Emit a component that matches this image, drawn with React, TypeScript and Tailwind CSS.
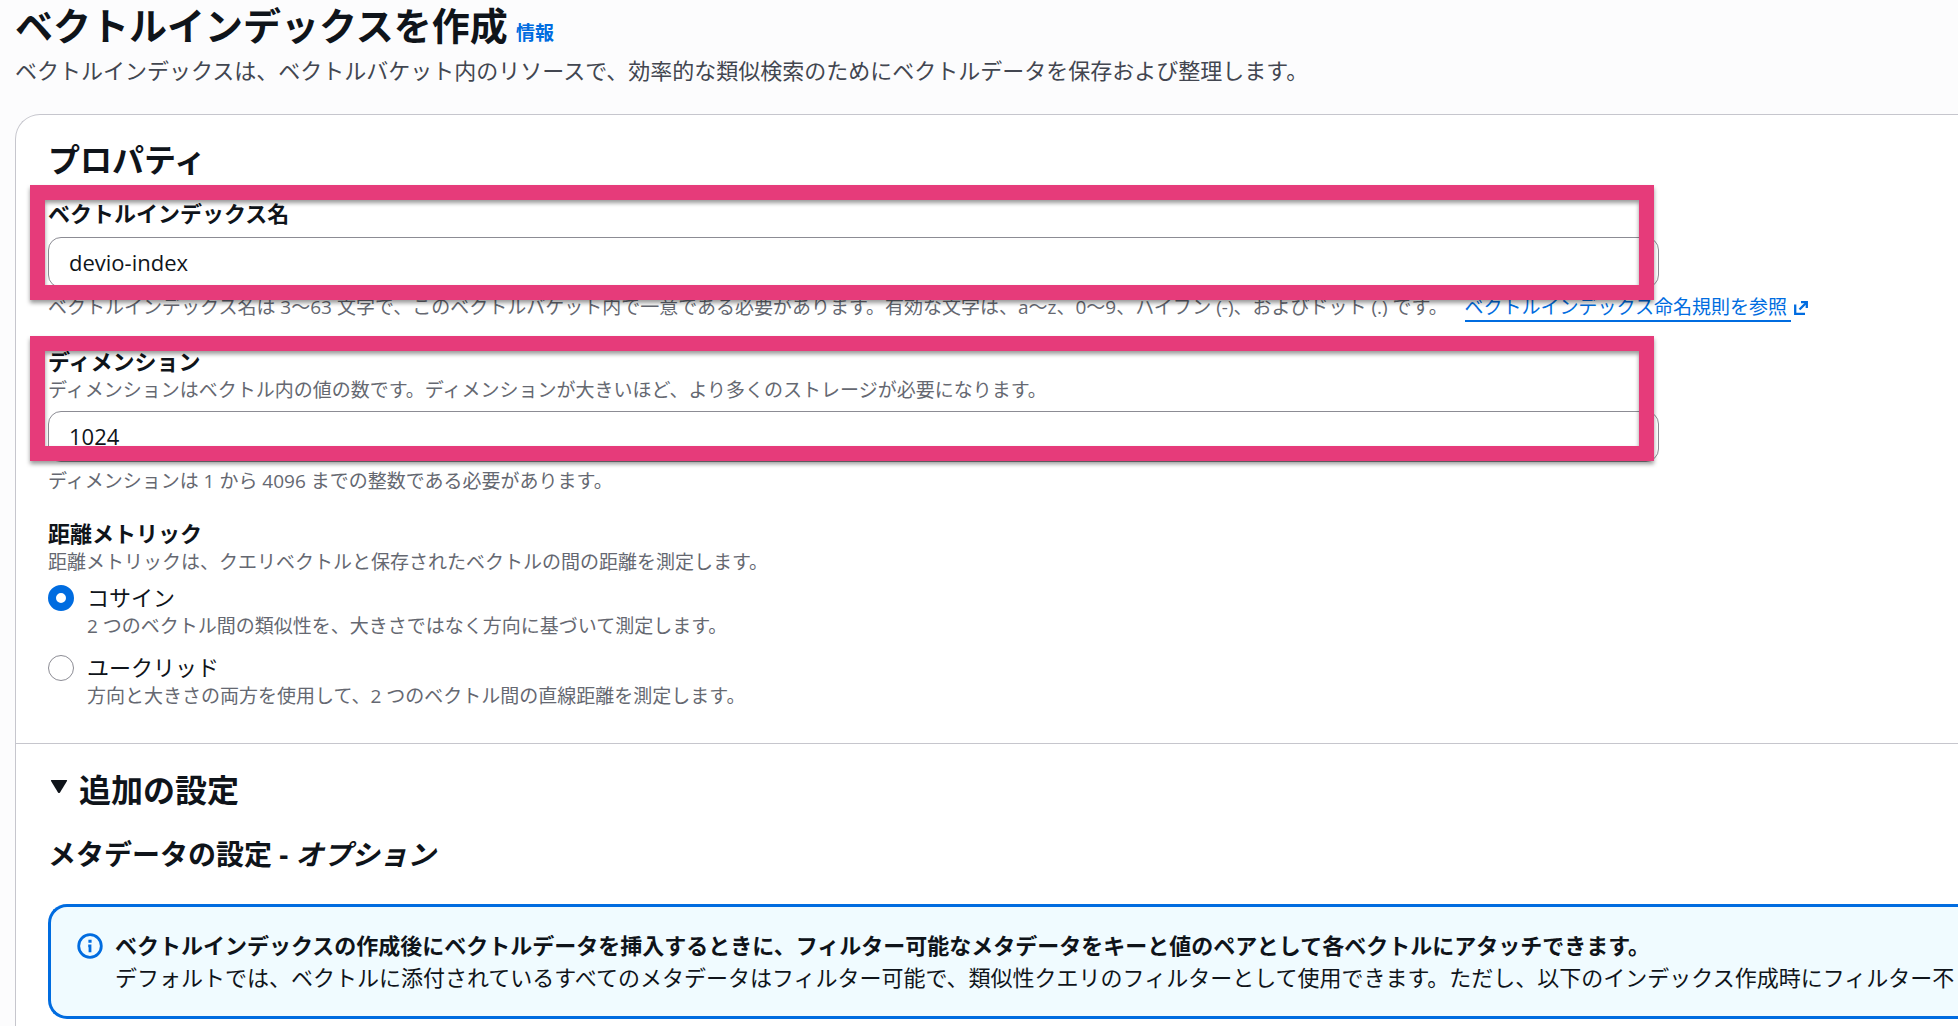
import { ReactNode, useState } from 'react';

type TextFieldProps = {
  id: string;
  label: string;
  description?: string;
  defaultValue: string;
  constraint: ReactNode;
  highlightClassName: string;
};

type Metric = {
  value: string;
  label: string;
  description: string;
};

const metrics: Metric[] = [
  {
    value: 'cosine',
    label: 'コサイン',
    description: '2 つのベクトル間の類似性を、大きさではなく方向に基づいて測定します。',
  },
  {
    value: 'euclidean',
    label: 'ユークリッド',
    description: '方向と大きさの両方を使用して、2 つのベクトル間の直線距離を測定します。',
  },
];

function ExternalIcon() {
  return (
    <svg viewBox="0 0 16 16" className="size-4 shrink-0" fill="none" stroke="currentColor" strokeWidth="2.3">
      <path d="M8 2.2h5.800V8" />
      <path d="M13.8 2.2 6.5 9.5" />
      <path d="M2.2 4.5v9.300H12" />
    </svg>
  );
}

function InfoIcon() {
  return (
    <svg viewBox="0 0 26 26" className="mt-1 size-[26px] shrink-0 text-[#006ce0]" fill="none" stroke="currentColor">
      <circle cx="13" cy="13" r="11.3" strokeWidth="2.8" />
      <path d="M13 6.8v3" strokeWidth="3.2" />
      <path d="M11.2 12.8H13v6.500" strokeWidth="2.8" />
    </svg>
  );
}

function TextField({ id, label, description, defaultValue, constraint, highlightClassName }: TextFieldProps) {
  return (
    <div>
      <div className="relative w-full max-w-[1611px]">
        <label htmlFor={id} className="block text-[22px] leading-8 font-bold">
          {label}
        </label>
        {description && (
          <p id={`${id}-description`} className="text-[19px] leading-[26px] text-[#656871]">
            {description}
          </p>
        )}
        <input
          id={id}
          type="text"
          defaultValue={defaultValue}
          aria-describedby={description ? `${id}-description` : undefined}
          className="mt-2 block h-[51px] w-full rounded-[13px] border border-[#8c8c94] bg-white px-5 pb-0.5 text-[22px] outline-none"
        />
        <div
          className={`pointer-events-none absolute right-[5px] -left-[18px] border-[15px] border-[#e63b7a] drop-shadow-[0_3px_2px_rgba(0,0,0,0.4)] ${highlightClassName}`}
        />
      </div>
      <p className="mt-1.5 text-[19px] leading-[26px] whitespace-nowrap text-[#656871]">{constraint}</p>
    </div>
  );
}

export default function App() {
  const [metric, setMetric] = useState('cosine');
  const [expanded, setExpanded] = useState(true);

  return (
    <main
      lang="ja"
      className="flex min-h-screen flex-col overflow-hidden bg-[#fcfcfd] pl-[15px] font-['Open_Sans','Noto_Sans_CJK_JP',sans-serif] text-[#0f141a]"
    >
      <header>
        <div className="flex items-baseline gap-2">
          <h1 className="text-[38px] leading-[50px] font-bold">ベクトルインデックスを作成</h1>
          <a href="#info" className="text-[19px] font-bold text-[#006ce0]">
            情報
          </a>
        </div>
        <p className="mt-1 text-[22px] leading-8 text-[#424650]">
          ベクトルインデックスは、ベクトルバケット内のリソースで、効率的な類似検索のためにベクトルデータを保存および整理します。
        </p>
      </header>

      <div className="mt-7 flex-1 rounded-tl-[25px] border-t border-l border-[#c6c6cd] bg-white">
        <section className="pt-[25px] pb-[34px] pl-8">
          <h2 className="text-[32px] leading-10 font-bold">プロパティ</h2>

          <div className="mt-[17px] flex flex-col gap-[23px]">
            <TextField
              id="index-name"
              label="ベクトルインデックス名"
              defaultValue="devio-index"
              highlightClassName="-top-3 -bottom-3"
              constraint={
                <>
                  ベクトルインデックス名は 3〜63 文字で、このベクトルバケット内で一意である必要があります。有効な文字は、a〜z、0〜9、ハイフン
                  (-)、およびドット (.) です。{' '}
                  <a href="#naming" className="ml-3 inline-flex items-center gap-0.5 text-[#006ce0]">
                    <span className="border-b-2 border-[#006ce0] pr-1">ベクトルインデックス命名規則を参照</span>
                    <ExternalIcon />
                  </a>
                </>
              }
            />
            <TextField
              id="dimension"
              label="ディメンション"
              description="ディメンションはベクトル内の値の数です。ディメンションが大きいほど、より多くのストレージが必要になります。"
              defaultValue="1024"
              highlightClassName="-top-[9px] bottom-px"
              constraint="ディメンションは 1 から 4096 までの整数である必要があります。"
            />

            <fieldset>
              <legend className="text-[22px] leading-8 font-bold">距離メトリック</legend>
              <p className="text-[19px] leading-[26px] text-[#656871]">
                距離メトリックは、クエリベクトルと保存されたベクトルの間の距離を測定します。
              </p>
              <div className="mt-1.5 flex flex-col gap-3">
                {metrics.map((item) => (
                  <div key={item.value} className="flex gap-[13px]">
                    <input
                      id={item.value}
                      type="radio"
                      name="metric"
                      value={item.value}
                      checked={metric === item.value}
                      onChange={() => setMetric(item.value)}
                      aria-describedby={`${item.value}-description`}
                      className="mt-1 size-[26px] shrink-0 appearance-none rounded-full border border-[#8c8c94] bg-white checked:border-[8px] checked:border-[#006ce0]"
                    />
                    <div>
                      <label htmlFor={item.value} className="block text-[22px] leading-8">
                        {item.label}
                      </label>
                      <p id={`${item.value}-description`} className="text-[19px] leading-[26px] text-[#656871]">
                        {item.description}
                      </p>
                    </div>
                  </div>
                ))}
              </div>
            </fieldset>
          </div>
        </section>

        <section className="border-t border-[#c6c6cd] pt-[26px] pl-8">
          <h2 className="text-[32px] leading-10 font-bold">
            <button
              type="button"
              aria-expanded={expanded}
              onClick={() => setExpanded(!expanded)}
              className="flex items-center gap-[9px]"
            >
              <svg viewBox="0 0 22 22" className={expanded ? 'size-[22px]' : 'size-[22px] -rotate-90'} fill="currentColor">
                <path d="M3.5 1h15q1 0 .5 1l-7 11.500q-1 1-2 0L3 2q-.5-1 .5-1z" />
              </svg>
              追加の設定
            </button>
          </h2>

          {expanded && (
            <>
              <h3 className="mt-[26px] text-[28px] leading-9 font-bold">
                メタデータの設定 - <em>オプション</em>
              </h3>
              <div className="mt-8 flex gap-3 overflow-hidden rounded-l-[19px] border-3 border-r-0 border-[#006ce0] bg-[#f0fbff] pt-[22px] pb-[23px] pl-[26px]">
                <InfoIcon />
                <div className="text-[22px] leading-8 whitespace-nowrap">
                  <p className="font-bold">
                    ベクトルインデックスの作成後にベクトルデータを挿入するときに、フィルター可能なメタデータをキーと値のペアとして各ベクトルにアタッチできます。
                  </p>
                  <p>
                    デフォルトでは、ベクトルに添付されているすべてのメタデータはフィルター可能で、類似性クエリのフィルターとして使用できます。ただし、以下のインデックス作成時にフィルター不
                  </p>
                </div>
              </div>
            </>
          )}
        </section>
      </div>
    </main>
  );
}
